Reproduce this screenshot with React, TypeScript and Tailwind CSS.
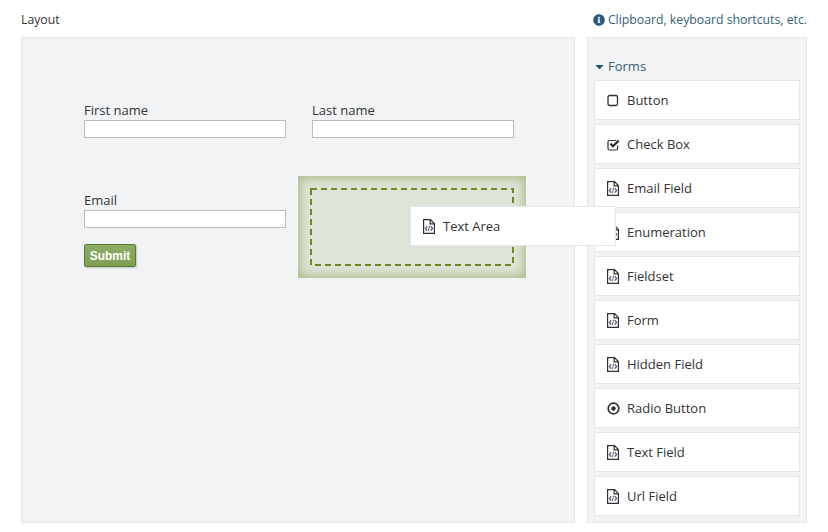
import { FaCaretDown, FaInfoCircle } from 'react-icons/fa'

function FileCodeIcon() {
  return (
    <svg width="12" height="15" viewBox="0 0 12 15" fill="none" stroke="#2f2f38" strokeWidth="1.2">
      <path d="M.6.6h6.9l3.9 3.9v9.9H.6z" />
      <path d="M7.2.6v4.2h4.2" />
      <path d="M4.200 7.200 2.400 9.400l1.800 2.200M7.800 7.200l1.800 2.200-1.800 2.200" stroke="#2f4f8f" strokeWidth="1.100" />
      <path d="M6.800 6.600 5.200 12.200" stroke="#a0662a" strokeWidth="1.100" />
    </svg>
  )
}

function SquareIcon() {
  return (
    <svg width="12" height="13" viewBox="0 0 12 13" fill="none" stroke="#2f2f38" strokeWidth="1.3">
      <rect x="1" y="1.5" width="9.5" height="10" rx="1.8" />
    </svg>
  )
}

function CheckIcon() {
  return (
    <svg width="14" height="13" viewBox="0 0 14 13" fill="none" stroke="#2f2f38">
      <path d="M10.6 7.5v3a1.5 1.5 0 0 1-1.5 1.5H2.5A1.5 1.5 0 0 1 1 10.500V4a1.500 1.500 0 0 1 1.500-1.500H9" strokeWidth="1.2" />
      <path d="M3.400 5.600 6 8.200 11.600 2.600" strokeWidth="2.200" />
    </svg>
  )
}

function RadioIcon() {
  return (
    <svg width="13" height="13" viewBox="0 0 13 13" fill="#2f2f38" stroke="none">
      <circle cx="6.500" cy="6.500" r="5.300" fill="none" stroke="#2f2f38" strokeWidth="1.700" />
      <circle cx="6.500" cy="6.500" r="2.200" />
    </svg>
  )
}

const items = [
  { label: 'Button', icon: SquareIcon },
  { label: 'Check Box', icon: CheckIcon },
  { label: 'Email Field', icon: FileCodeIcon },
  { label: 'Enumeration', icon: FileCodeIcon },
  { label: 'Fieldset', icon: FileCodeIcon },
  { label: 'Form', icon: FileCodeIcon },
  { label: 'Hidden Field', icon: FileCodeIcon },
  { label: 'Radio Button', icon: RadioIcon },
  { label: 'Text Field', icon: FileCodeIcon },
  { label: 'Url Field', icon: FileCodeIcon },
]

function Field({ label }: { label: string }) {
  return (
    <div className="w-[202px]">
      <label className="block h-[20px] text-[13px] leading-[20px] text-[#333]">{label}</label>
      <input type="text" className="block w-full h-[18px] bg-white border border-[#bbb] outline-none" />
    </div>
  )
}

function PaletteItem({ label, icon: Icon, className }: { label: string; icon: () => React.ReactElement; className: string }) {
  return (
    <div className={`flex items-center h-[40px] pl-[12px] bg-white border border-[#e6e7ea] text-[13px] ${className}`}>
      <span className="flex w-[20px] shrink-0"><Icon /></span>
      <span className="mt-[2px]">{label}</span>
    </div>
  )
}

export default function App() {
  return (
    <div className="relative w-[828px] h-[532px] bg-white overflow-hidden text-[#333] font-['Open_Sans',sans-serif]">
      {/* Top bar */}
      <div className="flex items-center justify-between h-[37px] px-[21px] pt-[3px] text-[12.25px]">
        <span>Layout</span>
        <span className="flex items-center gap-[3px] text-[#336178]">
          <FaInfoCircle size={12} className="text-[#2c5a7c]" />
          Clipboard, keyboard shortcuts, etc.
        </span>
      </div>

      <div className="flex gap-[12px] pl-[21px]">
        {/* Canvas */}
        <div className="w-[554px] h-[486px] bg-[#f2f3f5] border border-[#e6e7ea] pl-[62px] pt-[62px]">
          <div className="flex gap-[26px]">
            <Field label="First name" />
            <Field label="Last name" />
          </div>
          <div className="flex mt-[38px]">
            <div className="pt-[14px]">
              <Field label="Email" />
              <button className="block mt-[16px] w-[52px] h-[23px] rounded-[2px] border border-[#5a7a30] bg-gradient-to-b from-[#8fac65] to-[#7f9d52] shadow-[1px_1px_2px_rgba(0,0,0,0.2)] text-white text-[12px] font-bold font-['Liberation_Sans',sans-serif]">
                Submit
              </button>
            </div>
            <div className="relative ml-[12px] w-[228px] h-[102px] bg-[#dde3d6] shadow-[inset_0_0_9px_3px_#afbf90]">
              <svg className="absolute left-[12px] top-[12px]" width="204" height="78" fill="none">
                <rect x="1" y="1" width="202" height="76" stroke="#6b8a22" strokeWidth="2" strokeDasharray="6 4" />
              </svg>
            </div>
          </div>
        </div>

        {/* Palette */}
        <div className="w-[220px] h-[486px] bg-[#f2f3f5] border border-[#e6e7ea] px-[6px] pt-[17px]">
          <div className="flex items-center gap-[2px] h-[23px] mb-[2px] -ml-[1px] text-[13px] text-[#336178]">
            <FaCaretDown size={13} className="text-[#1d5a80]" />
            Forms
          </div>
          <div className="flex flex-col gap-[4px]">
            {items.map(it => (
              <PaletteItem key={it.label} label={it.label} icon={it.icon} className="" />
            ))}
          </div>
        </div>
      </div>

      {/* Item being dragged */}
      <PaletteItem label="Text Area" icon={FileCodeIcon} className="absolute left-[410px] top-[206px] w-[206px]" />
    </div>
  )
}
